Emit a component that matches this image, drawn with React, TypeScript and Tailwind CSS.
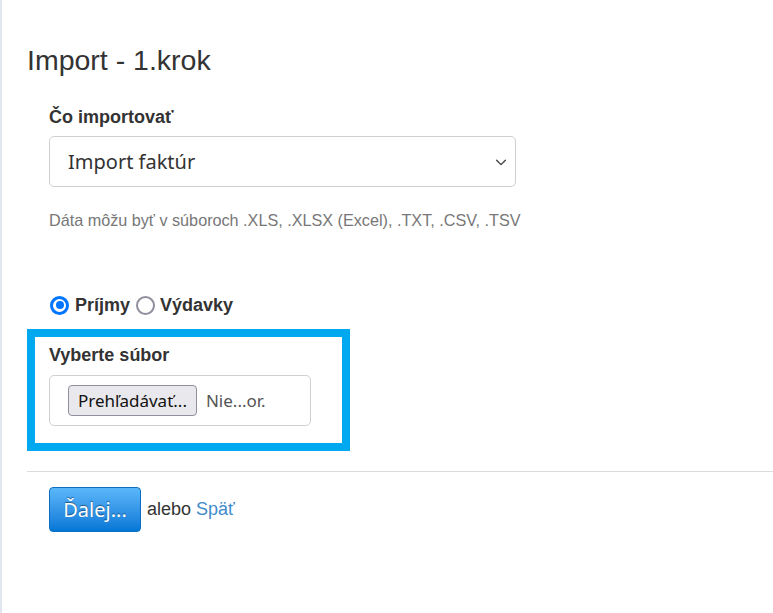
import React from "react";

export default function App() {
  const arial = { fontFamily: '"Liberation Sans", Arial, sans-serif' };
  const ui = { fontFamily: '"Noto Sans", "Open Sans", sans-serif' };
  return (
    <div
      className="min-h-[613px] w-[773px] bg-white border-l-2 border-[#dfe6ee] pl-[25px] text-[#333]"
      style={arial}
    >
      <h1 className="pt-[44px] text-[28.5px] leading-[32px] font-normal text-[#333]">Import - 1.krok</h1>
      <div className="pl-[22px]">
        <div className="mt-[30px] text-[18px] leading-[22px] font-bold text-[#333]">Čo importovať</div>
        <div className="mt-[8px] flex h-[51px] w-[467px] items-center justify-between rounded-[5px] border border-[#cfcfcf] pl-[18px] pr-[7px]">
          <span className="text-[20px] text-[#333]" style={ui}>
            Import faktúr
          </span>
          <svg width="14" height="14" viewBox="0 0 16 16" fill="none" stroke="#444" strokeWidth="1.6" strokeLinecap="round" strokeLinejoin="round">
            <path d="M3 6l5 5 5-5" />
          </svg>
        </div>
        <p className="mt-[23px] text-[16.2px] leading-[20px] text-[#777]">
          Dáta môžu byť v súboroch .XLS, .XLSX (Excel), .TXT, .CSV, .TSV
        </p>
        <div className="mt-[64px] flex items-center text-[18px] font-bold leading-[22px] text-[#333]">
          <span className="ml-[1px] mr-[6px] flex h-[19px] w-[19px] items-center justify-center rounded-full border-[3px] border-[#0075ff]">
            <span className="h-[8px] w-[8px] rounded-full bg-[#0075ff]" />
          </span>
          <span>Príjmy</span>
          <span className="ml-[6px] mr-[5px] h-[19px] w-[19px] rounded-full border-[2.5px] border-[#8f8f9d]" />
          <span>Výdavky</span>
        </div>
      </div>
      <div className="mt-[13px] h-[122px] w-[323px] border-[8px] border-[#00a8ef] pl-[14px] pt-[7px]">
        <div className="text-[18px] font-bold leading-[22px] text-[#333]">Vyberte súbor</div>
        <div className="mt-[9px] flex h-[51px] w-[262px] items-center rounded-[5px] border border-[#d0d0d0] pl-[18px]">
          <span
            className="flex h-[31px] items-center rounded-[4px] border border-[#8f8f9d] bg-[#e9e9ed] px-[9px] text-[17px] text-[#111]"
            style={ui}
          >
            Prehľadávať...
          </span>
          <span className="ml-[9px] text-[17px] text-[#555]" style={ui}>
            Nie...or.
          </span>
        </div>
      </div>
      <div className="mt-[20px] h-px w-full bg-[#dcdcdc]" />
      <div className="mt-[15px] flex items-center pl-[22px]">
        <span
          className="flex h-[45px] w-[92px] items-center justify-center rounded-[4px] border border-[#0a6fc2] bg-gradient-to-b from-[#5ab7fa] to-[#0077d6] text-[20px] text-white"
          style={{ ...ui, textShadow: "0 -1px 1px rgba(0,0,0,0.45)" }}
        >
          Ďalej...
        </span>
        <span className="ml-[6px] text-[18px] text-[#333]">alebo</span>
        <span className="ml-[5px] text-[18px] text-[#428bca]">Späť</span>
      </div>
    </div>
  );
}
